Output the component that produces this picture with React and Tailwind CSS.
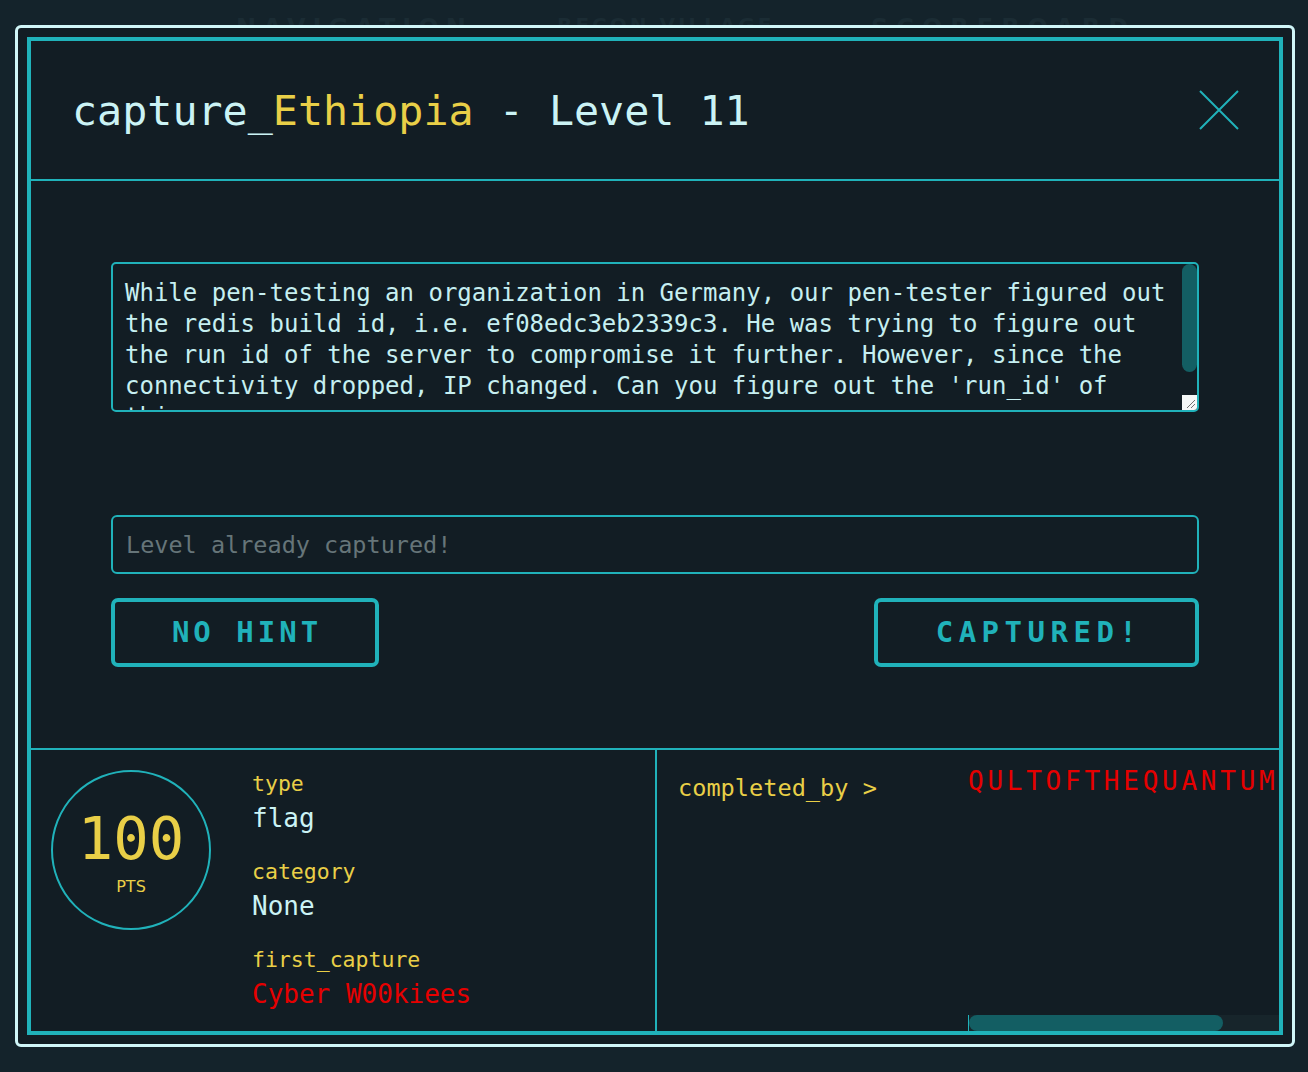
import { useState } from "react";

const MONO = "font-['DejaVu_Sans_Mono','Liberation_Mono',monospace]";

const DESCRIPTION_LINES = [
  "While pen-testing an organization in Germany, our pen-tester figured out",
  "the redis build id, i.e. ef08edc3eb2339c3. He was trying to figure out",
  "the run id of the server to compromise it further. However, since the",
  "connectivity dropped, IP changed. Can you figure out the 'run_id' of",
  "this server",
];

const NAV_ITEMS = [
  { label: "NAVIGATION", className: "left-[236px] tracking-[7px] text-[24px]" },
  { label: "RECON VILLAGE", className: "left-[557px] tracking-[3px] text-[20px]" },
  { label: "SCOREBOARD", className: "left-[871px] tracking-[8px] text-[24px]" },
];

function CloseIcon() {
  return (
    <svg width="40" height="40" viewBox="0 0 40 40" fill="none">
      <path d="M1 1 L39 39 M39 1 L1 39" stroke="#20b2ba" strokeWidth="2" />
    </svg>
  );
}

function InfoGroup({ label, value, valueClass }) {
  return (
    <div className="mb-[20px]">
      <div className={`${MONO} text-[21.5px] leading-[28px] text-[#e9cf47]`}>{label}</div>
      <div className={`${MONO} text-[26px] leading-[40px] ${valueClass}`}>{value}</div>
    </div>
  );
}

const ChallengeModal = () => {
  const [flag, setFlag] = useState("");

  return (
    <div className="absolute left-[15px] top-[25px] h-[1022px] w-[1280px] rounded-[6px] border-[3px] border-[#d0f6f8] bg-[#121d24] p-[9px]">
      <div className="flex h-full flex-col border-4 border-[#20b2ba]">
        <header className="flex h-[140px] shrink-0 items-center justify-between border-b-2 border-[#20b2ba] pl-[41px] pr-[40px]">
          <h1 className={`${MONO} mt-[2px] text-[41.7px] leading-none text-[#cbf3f5]`}>
            capture_<span className="text-[#e9cf47]">Ethiopia</span> - Level 11
          </h1>
          <button type="button" aria-label="Close">
            <CloseIcon />
          </button>
        </header>

        <section className="flex h-[567px] shrink-0 flex-col px-[80px] pt-[81px]">
          <div className="flex h-[150px] overflow-hidden rounded-[5px] border-2 border-[#20b2ba]">
            <div className={`${MONO} flex-1 overflow-hidden whitespace-pre pl-[12px] pt-[14px] text-[24px] leading-[31px] text-[#c6eff1]`}>
              {DESCRIPTION_LINES.map((line) => (
                <div key={line}>{line}</div>
              ))}
            </div>
            <div className="flex w-[15px] flex-col justify-between">
              <div className="h-[108px] rounded-full bg-[#135e63]" />
              <div className="relative h-[15px] bg-[#f4f7f7]">
                <svg className="absolute inset-0" width="15" height="15" viewBox="0 0 15 15">
                  <path d="M13 5 L5 13 M13 9 L9 13" stroke="#707070" strokeWidth="1" />
                </svg>
              </div>
            </div>
          </div>

          <input
            value={flag}
            onChange={(e) => setFlag(e.target.value)}
            placeholder="Level already captured!"
            className={`${MONO} mt-[103px] h-[59px] w-full rounded-[6px] border-2 border-[#20b2ba] bg-transparent pl-[13px] text-[23.5px] text-[#c6eff1] outline-none placeholder:text-[#667579]`}
          />

          <div className="mt-[24px] flex justify-between">
            <button
              type="button"
              className={`${MONO} h-[69px] w-[268px] rounded-[7px] border-4 border-[#20b2ba] pl-[4px] text-[29px] font-bold tracking-[4px] text-[#20b2ba]`}
            >
              NO HINT
            </button>
            <button
              type="button"
              className={`${MONO} h-[69px] w-[325px] rounded-[7px] border-4 border-[#20b2ba] pl-[5px] text-[29px] font-bold tracking-[5.5px] text-[#20b2ba]`}
            >
              CAPTURED!
            </button>
          </div>
        </section>

        <footer className="flex min-h-0 flex-1 border-t-2 border-[#20b2ba]">
          <div className="flex w-[626px] shrink-0 border-r-2 border-[#20b2ba] pl-[20px] pt-[20px]">
            <div className="flex h-[160px] w-[160px] shrink-0 flex-col items-center justify-center rounded-full border-2 border-[#20b2ba]">
              <div className={`${MONO} mt-[6px] text-[59px] leading-[60px] text-[#e9cf47]`}>100</div>
              <div className="mt-[8px] font-['DejaVu_Sans',sans-serif] text-[16px] leading-[20px] text-[#e9cf47]">PTS</div>
            </div>
            <div className="ml-[41px]">
              <InfoGroup label="type" value="flag" valueClass="text-[#cbf3f5]" />
              <InfoGroup label="category" value="None" valueClass="text-[#cbf3f5]" />
              <InfoGroup label="first_capture" value="Cyber W00kiees" valueClass="text-[#e60000]" />
            </div>
          </div>

          <div className="flex min-w-0 flex-1">
            <div className={`${MONO} w-[311px] shrink-0 pl-[21px] pt-[24px] text-[23.6px] leading-[28px] text-[#e9cf47]`}>
              completed_by &gt;
            </div>
            <div className="flex min-w-0 flex-1 flex-col justify-between overflow-hidden">
              <div className={`${MONO} whitespace-nowrap pt-[16px] text-[26px] leading-[30px] tracking-[3.75px] text-[#e60000]`}>
                QULTOFTHEQUANTUM
              </div>
              <div className="flex h-[16px] border-l border-[#20b2ba] bg-[#17252b]">
                <div className="h-full w-[254px] rounded-full bg-[#135e63]" />
              </div>
            </div>
          </div>
        </footer>
      </div>
    </div>
  );
};

export default function App() {
  return (
    <div className="relative h-[1072px] w-[1308px] overflow-hidden bg-[#14232b]">
      <nav className="relative h-[60px]">
        {NAV_ITEMS.map((item) => (
          <span
            key={item.label}
            className={`absolute top-[10px] font-['DejaVu_Sans',sans-serif] font-bold text-[#1b2c34] ${item.className}`}
          >
            {item.label}
          </span>
        ))}
      </nav>
      <ChallengeModal />
    </div>
  );
}
